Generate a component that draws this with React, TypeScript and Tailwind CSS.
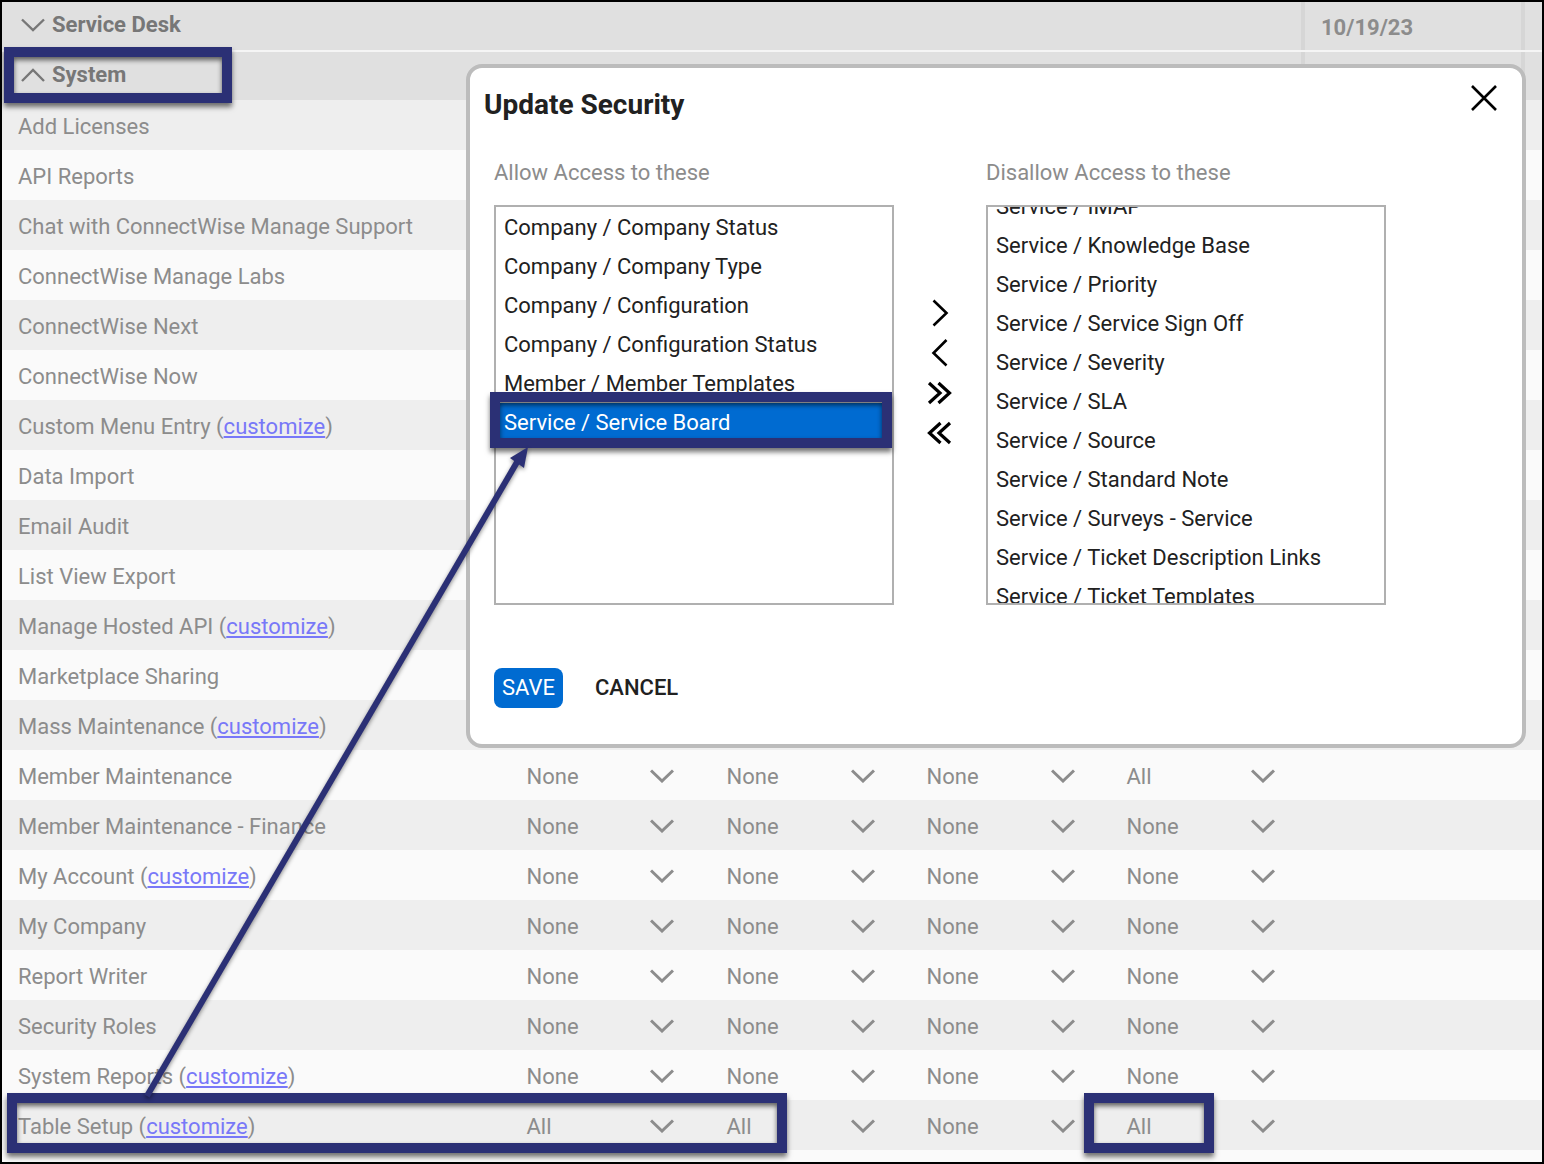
type Row = { name: string; link?: boolean; values?: string[] };

const rows: Row[] = [
  { name: "Add Licenses" },
  { name: "API Reports" },
  { name: "Chat with ConnectWise Manage Support" },
  { name: "ConnectWise Manage Labs" },
  { name: "ConnectWise Next" },
  { name: "ConnectWise Now" },
  { name: "Custom Menu Entry", link: true },
  { name: "Data Import" },
  { name: "Email Audit" },
  { name: "List View Export" },
  { name: "Manage Hosted API", link: true },
  { name: "Marketplace Sharing" },
  { name: "Mass Maintenance", link: true },
  { name: "Member Maintenance", values: ["None", "None", "None", "All"] },
  { name: "Member Maintenance - Finance", values: ["None", "None", "None", "None"] },
  { name: "My Account", link: true, values: ["None", "None", "None", "None"] },
  { name: "My Company", values: ["None", "None", "None", "None"] },
  { name: "Report Writer", values: ["None", "None", "None", "None"] },
  { name: "Security Roles", values: ["None", "None", "None", "None"] },
  { name: "System Reports", link: true, values: ["None", "None", "None", "None"] },
  { name: "Table Setup", link: true, values: ["All", "All", "None", "All"] },
];

const allowList = [
  "Company / Company Status",
  "Company / Company Type",
  "Company / Configuration",
  "Company / Configuration Status",
  "Member / Member Templates",
];

const disallowList = [
  "Service / IMAP",
  "Service / Knowledge Base",
  "Service / Priority",
  "Service / Service Sign Off",
  "Service / Severity",
  "Service / SLA",
  "Service / Source",
  "Service / Standard Note",
  "Service / Surveys - Service",
  "Service / Ticket Description Links",
  "Service / Ticket Templates",
];

const Chevron = ({ up = false, weight = 3, className = "" }: { up?: boolean; weight?: number; className?: string }) => (
  <svg viewBox="0 0 24 14" className={"w-6 h-3.5 shrink-0 " + className} fill="none" stroke="currentColor" strokeWidth={weight}>
    <path d={up ? "M1 13 L12 2 L23 13" : "M1 1.5 L12 12 L23 1.5"} />
  </svg>
);

const Arrow = ({ d, weight = 2.6 }: { d: string; weight?: number }) => (
  <svg viewBox="0 0 28 28" className="w-7 h-7" fill="none" stroke="#000" strokeWidth={weight}>
    <path d={d} />
  </svg>
);

const Callout = ({ className }: { className: string }) => (
  <div className={"absolute border-[10px] border-[#2b3075] shadow-[0_4px_5px_rgba(0,0,0,0.55),inset_0_3px_5px_rgba(0,0,0,0.6)] " + className} />
);

const TableRow = ({ row, index }: { row: Row; index: number }) => (
  <div className={"flex items-center h-[50px] pt-[2px] " + (index % 2 === 0 ? "bg-[#eeeeee]" : "bg-[#fafafa]")}>
    <div className="w-[524.5px] pl-4">
      {row.name}
      {row.link && (
        <>
          {" ("}
          <span className="text-[#7878f8] underline">customize</span>
          {")"}
        </>
      )}
    </div>
    {row.values?.map((v, i) => (
      <div key={i} className="w-[200px] flex items-center">
        <span className="w-[123.5px]">{v}</span>
        <Chevron className={i === 0 ? "" : "ml-px"} />
      </div>
    ))}
  </div>
);

export default function App() {
  return (
    <div className="relative w-[1544px] h-[1164px] overflow-hidden border-2 border-black bg-[#fafafa] text-[22px] text-[#8c8c8c] font-['Roboto',sans-serif]">
      <div className="flex h-[48px] bg-[#e0e0e0] text-[#777777] font-bold">
        <div className="w-[1299px] flex items-center gap-[7px] pl-[19px] pb-[3px]">
          <Chevron weight={2.4} />
          Service Desk
        </div>
        <div className="w-[224px] border-x-4 border-[#d6d6d6] pl-[16px] flex items-center pt-[2px] text-[#8c8c8c]">10/19/23</div>
      </div>
      <div className="flex h-[2px] bg-[#f5f5f5]" />
      <div className="flex h-[48px] bg-[#e0e0e0] text-[#777777] font-bold">
        <div className="w-[1299px] flex items-center gap-[7px] pl-[19px] pb-[3px]">
          <Chevron up weight={2.4} />
          System
        </div>
        <div className="w-[224px] border-x-4 border-[#d6d6d6]" />
      </div>
      {rows.map((row, i) => (
        <TableRow key={row.name} row={row} index={i} />
      ))}

      {/* dialog */}
      <div className="absolute left-[464px] top-[62px] w-[1060px] h-[684px] rounded-2xl border-4 border-[#bcbcbc] bg-white pl-[14px] pt-[17px]">
        <div className="text-[28px] font-bold text-[#212121] leading-[40px]">Update Security</div>
        <button className="absolute right-[25px] top-[17px]">
          <svg viewBox="0 0 26 26" className="w-[26px] h-[26px]" fill="none" stroke="#000" strokeWidth="2.6">
            <path d="M1 1 L25 25 M25 1 L1 25" />
          </svg>
        </button>
        <div className="flex mt-[30px] pl-[10px]">
          <div className="w-[400px]">
            <div className="leading-[36px] mb-[14px]">Allow Access to these</div>
            <div className="h-[400px] border-2 border-[#b0b0b0] overflow-hidden text-[#212121] pt-[0.5px]">
              {allowList.map((t) => (
                <div key={t} className="h-[39px] leading-[39px] pl-[8px]">{t}</div>
              ))}
              <div className="h-[39px] leading-[39px] pl-[8px] bg-[#006bd1] text-white">Service / Service Board</div>
            </div>
          </div>
          <div className="w-[92px] flex flex-col items-center pt-[145px] gap-3 mt-[-1px]">
            <Arrow d="M7.5 1.5 L20.5 14 L7.5 26.5" />
            <Arrow d="M20.5 1 L7.5 14 L20.5 26.5" />
            <Arrow weight={3.2} d="M3 4 L14 14 L3 24 M12.5 4 L23.5 14 L12.5 24" />
            <Arrow weight={3.2} d="M14.5 4 L3.5 14 L14.5 24 M24 4 L13 14 L24 24" />
          </div>
          <div className="w-[400px]">
            <div className="leading-[36px] mb-[14px]">Disallow Access to these</div>
            <div className="h-[400px] border-2 border-[#b0b0b0] overflow-hidden text-[#212121]">
              <div className="-mt-[20px]">
                {disallowList.map((t) => (
                  <div key={t} className="h-[39px] leading-[39px] pl-[8px]">{t}</div>
                ))}
              </div>
            </div>
          </div>
        </div>
        <div className="flex items-center mt-[63px] ml-[10px] gap-8">
          <button className="w-[69px] h-[40px] rounded-lg bg-[#006bd1] text-white pb-0.5">SAVE</button>
          <button className="text-[#212121] font-medium pb-0.5">CANCEL</button>
        </div>
      </div>

      {/* annotations */}
      <Callout className="left-[2px] top-[45px] w-[228px] h-[56px]" />
      <Callout className="left-[488px] top-[390px] w-[402px] h-[56px]" />
      <Callout className="left-[5px] top-[1091px] w-[780px] h-[60px]" />
      <Callout className="left-[1082px] top-[1091px] w-[130px] h-[60px]" />
      <svg className="absolute left-0 top-0 w-[1540px] h-[1160px] pointer-events-none drop-shadow-[0_2px_2px_rgba(0,0,0,0.45)]" viewBox="0 0 1540 1160">
        <path d="M145 1094 L518 455" stroke="#2b3075" strokeWidth="6" fill="none" />
        <path d="M526 445 L508 456 L522 466 Z" fill="#2b3075" />
      </svg>
    </div>
  );
}
